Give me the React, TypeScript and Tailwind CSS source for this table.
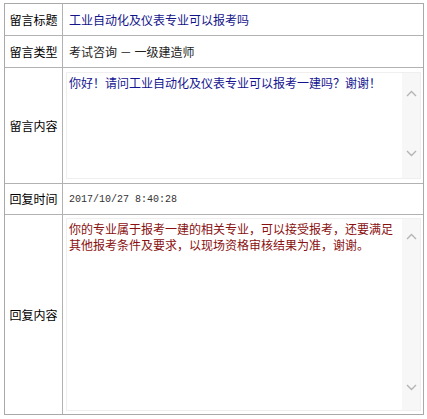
const cjk = "font-['Noto_Sans_CJK_SC','Noto_Sans',sans-serif]";

function Chevron({ up }: { up?: boolean }) {
  return (
    <svg width="11" height="7" viewBox="0 0 11 7" className="block">
      <polyline
        points={up ? "1,6 5.5,1.5 10,6" : "1,1 5.5,5.5 10,1"}
        fill="none"
        stroke="#b4b4b4"
        strokeWidth="1.4"
      />
    </svg>
  );
}

function FakeTextarea({
  lines,
  color,
  height,
  upTop,
  downBottom,
}: {
  lines: string[];
  color: string;
  height: string;
  upTop: string;
  downBottom: string;
}) {
  return (
    <div className={`flex ${height} border border-[#efefef] bg-white`}>
      <div className={`flex-1 px-[2px] pt-[2px] text-[12px] leading-[16px] ${color}`}>
        {lines.map((l) => (
          <div key={l}>{l}</div>
        ))}
      </div>
      <div className="flex w-[18px] flex-col items-center justify-between bg-[#f7f7f7]">
        <div className={upTop}>
          <Chevron up />
        </div>
        <div className={downBottom}>
          <Chevron />
        </div>
      </div>
    </div>
  );
}

function Label({ text }: { text: string }) {
  return (
    <div className="flex items-center justify-center bg-white text-[12px] text-black">
      {text}
    </div>
  );
}

export default function App() {
  return (
    <div className={`min-h-[419px] bg-white pl-[4px] pt-[3px] ${cjk}`}>
      <div className="grid w-[420px] grid-cols-[57px_1fr] grid-rows-[31px_31px_115px_30px_199px] gap-px border border-[#a9a9a9] bg-[#b2b2b2]">
        <Label text="留言标题" />
        <div className="flex items-center bg-white pl-[6px] text-[12px] text-[#14148a]">
          工业自动化及仪表专业可以报考吗
        </div>

        <Label text="留言类型" />
        <div className="flex items-center bg-white pl-[6px] text-[12px] text-[#222]">
          考试咨询 － 一级建造师
        </div>

        <Label text="留言内容" />
        <div className="bg-white pl-[3px] pr-[2px] pt-[4px]">
          <FakeTextarea
            lines={["你好！请问工业自动化及仪表专业可以报考一建吗？谢谢！"]}
            color="text-[#141490]"
            height="h-[107px]"
            upTop="mt-[17px]"
            downBottom="mb-[21px]"
          />
        </div>

        <Label text="回复时间" />
        <div className="flex items-center bg-white pl-[6px] font-['Liberation_Mono',monospace] text-[10px] text-[#333]">
          2017/10/27 8:40:28
        </div>

        <Label text="回复内容" />
        <div className="bg-white pl-[3px] pr-[2px] pt-[3px]">
          <FakeTextarea
            lines={[
              "你的专业属于报考一建的相关专业，可以接受报考，还要满足",
              "其他报考条件及要求，以现场资格审核结果为准，谢谢。",
            ]}
            color="text-[#8a1010]"
            height="h-[193px]"
            upTop="mt-[14px]"
            downBottom="mb-[19px]"
          />
        </div>
      </div>
    </div>
  );
}
